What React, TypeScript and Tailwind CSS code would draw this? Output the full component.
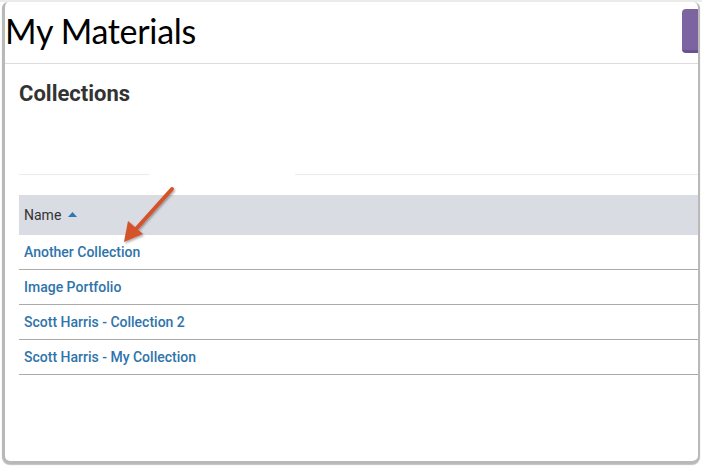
import React from "react";

const rows = [
  "Another Collection",
  "Image Portfolio",
  "Scott Harris - Collection 2",
  "Scott Harris - My Collection",
];

export default function App() {
  return (
    <div className="relative w-[702px] h-[468px] overflow-hidden bg-white" style={{ fontFamily: "Roboto, 'Liberation Sans', sans-serif" }}>
      <div className="h-[2px] bg-[#ebebeb]" />
      <div className="ml-[2px] w-[698px] h-[462px] rounded-b-[8px] rounded-t-[6px] border-l-[3px] border-r-[2px] border-b-[3px] border-[#b9b9b9] bg-white overflow-hidden shadow-[0_1px_1px_rgba(0,0,0,0.25)]">
        <div className="flex items-start justify-between h-[62px] border-b border-[#dcdcdc]">
          <h1 className="ml-[0px] mt-[9px] text-[34px] leading-[40px] text-black font-normal tracking-[-0.3px]" style={{ fontFamily: "Lato, 'Open Sans', sans-serif" }}>My Materials</h1>
          <div className="mt-[7px] w-[16px] h-[44px] rounded-l-[4px] bg-[#7c64a1] border-b-[3px] border-[#6a5190]" />
        </div>
        <div className="pl-[14px]">
          <h2 className="mt-[17px] text-[22px] leading-[26px] font-bold text-[#333]">Collections</h2>
          <div className="relative mt-[67px] h-[1px] bg-[#ececec]">
            <div className="absolute left-[131px] top-[-26px] w-[145px] h-[36px] bg-white" />
          </div>
          <div className="mt-[20px]">
            <div className="h-[40px] bg-[#d9dce3] flex items-center pl-[5px] text-[14px] text-[#333]">
              <span>Name</span>
              <svg className="ml-[7px] mb-[2px]" width="9" height="5" viewBox="0 0 9 5">
                <path d="M0 5 L4.5 0 L9 5 Z" fill="#2a79b0" />
              </svg>
            </div>
            {rows.map((r) => (
              <div key={r} className="h-[35px] border-b border-[#aaaaaa] flex items-center pl-[5px] text-[14px] font-medium text-[#2e74aa]">
                {r}
              </div>
            ))}
          </div>
        </div>
      </div>
      <svg className="absolute left-0 top-0" width="702" height="468" viewBox="0 0 702 468">
        <defs>
          <filter id="sh" x="-20%" y="-20%" width="140%" height="140%">
            <feDropShadow dx="1" dy="1.5" stdDeviation="1.2" floodColor="#000" floodOpacity="0.35" />
          </filter>
        </defs>
        <g filter="url(#sh)">
          <line x1="172" y1="189" x2="136" y2="229" stroke="#d4532b" strokeWidth="4" strokeLinecap="round" />
          <path d="M124 242 L128 221 L143 234 Z" fill="#d4532b" />
        </g>
      </svg>
    </div>
  );
}
